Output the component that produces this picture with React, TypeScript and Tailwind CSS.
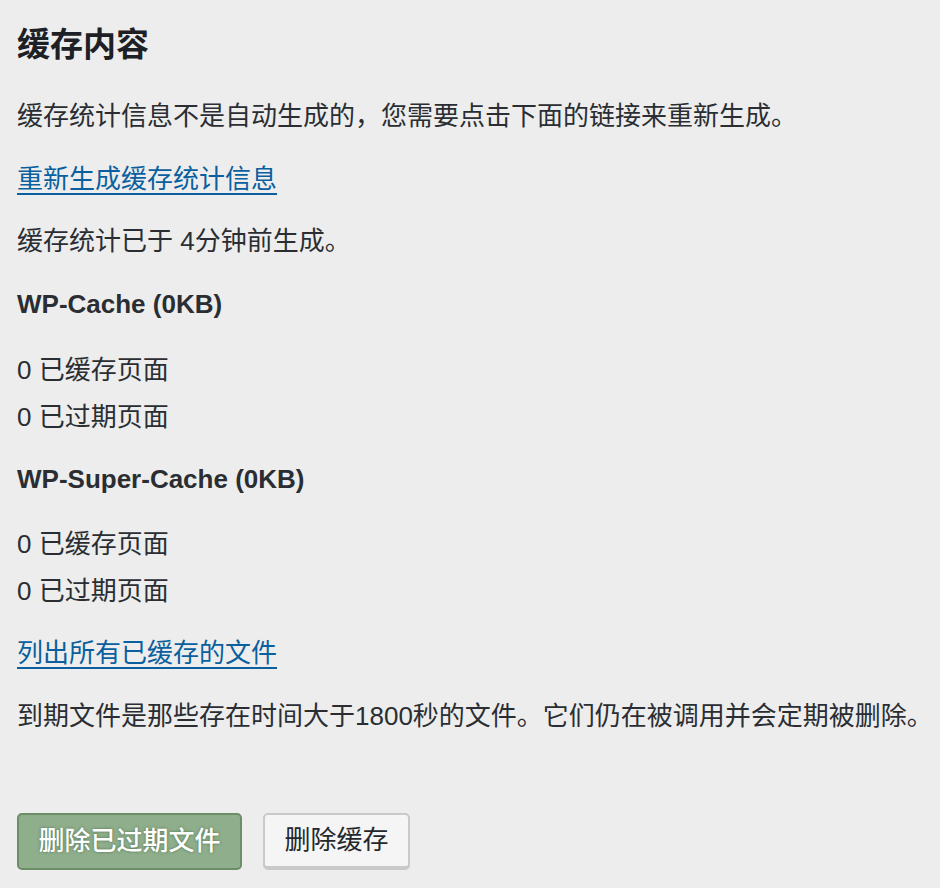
export default function App() {
  return (
    <div
      className="min-h-[888px] w-[940px] overflow-hidden bg-[#ededed] pl-[17px] pt-[25px] text-[26px] text-[#2a2e33]"
      style={{ fontFamily: '"Liberation Sans", "Noto Sans CJK SC", sans-serif' }}
    >
      <h2 className="text-[33px] leading-[40px] font-bold text-[#1d2125]">缓存内容</h2>

      <p className="mt-[33px] leading-[36px]">缓存统计信息不是自动生成的，您需要点击下面的链接来重新生成。</p>

      <p className="mt-[27px] leading-[36px]">
        <a href="#" className="text-[#0a5f9e] underline decoration-2 underline-offset-[5px]">
          重新生成缓存统计信息
        </a>
      </p>

      <p className="mt-[26px] leading-[36px]">缓存统计已于 4分钟前生成。</p>

      <h4 className="mt-[27px] leading-[36px] font-bold">WP-Cache (0KB)</h4>
      <p className="mt-[25px] leading-[47px]">
        0 已缓存页面
        <br />0 已过期页面
      </p>

      <h4 className="mt-[20px] leading-[36px] font-bold">WP-Super-Cache (0KB)</h4>
      <p className="mt-[24px] leading-[47px]">
        0 已缓存页面
        <br />0 已过期页面
      </p>

      <p className="mt-[20px] leading-[36px]">
        <a href="#" className="text-[#0a5f9e] underline decoration-2 underline-offset-[5px]">
          列出所有已缓存的文件
        </a>
      </p>

      <p className="mt-[27px] leading-[36px] whitespace-nowrap">
        到期文件是那些存在时间大于1800秒的文件。它们仍在被调用并会定期被删除。
      </p>

      <div className="mt-[79px] flex gap-[21px]">
        <button
          type="button"
          className="h-[57px] w-[225px] rounded-[5px] border-2 border-[#6b8e68] bg-[#8fae8c] font-medium text-white [text-shadow:0_0_3px_#4f6e4c]"
        >
          删除已过期文件
        </button>
        <button
          type="button"
          className="h-[57px] w-[147px] rounded-[5px] border-2 border-[#c9c9c9] border-b-[4px] bg-[#f5f5f5] text-[#23282d]"
        >
          删除缓存
        </button>
      </div>
    </div>
  );
}
